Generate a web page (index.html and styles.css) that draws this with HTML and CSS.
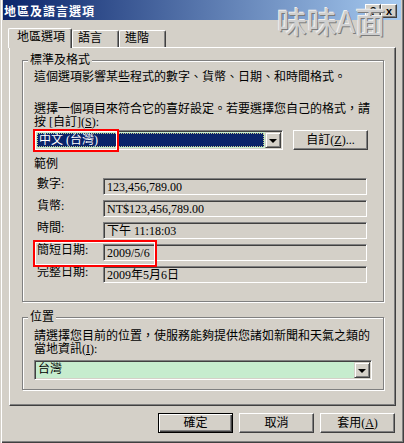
FILE: index.html
```html
<!DOCTYPE html>
<html>
    <head>
        <meta charset="utf-8">
        <title>地區及語言選項</title>
        <link rel="stylesheet" href="styles.css">
    </head>
    <body>
        <div class="window">
            <div class="titlebar">
                <span class="title">地區及語言選項</span>
                <div class="caption-buttons">
                    <span class="cap-btn">?</span>
                    <span class="cap-btn cap-close">x</span>
                </div>
            </div>
            <div class="watermark">味味A面</div>

            <div class="tabs">
                <div class="tab tab-active">地區選項</div>
                <div class="tab tab-lang">語言</div>
                <div class="tab tab-adv">進階</div>
            </div>

            <div class="pane">
                <div class="group group-format">
                    <div class="group-title">標準及格式</div>
                    <p class="line line-info">這個選項影響某些程式的數字、貨幣、日期、和時間格式。</p>
                    <p class="line line-choose">選擇一個項目來符合它的喜好設定。若要選擇您自己的格式，請<br>按 [自訂](<u>S</u>):</p>
                    <div class="select-row">
                        <div class="combo combo-locale">
                            <div class="combo-value focused">中文 (台灣)</div>
                            <div class="combo-arrow"><span class="tri"></span></div>
                        </div>
                        <button class="btn">自訂(<u>Z</u>)...</button>
                    </div>
                    <div class="samples-title">範例</div>
                    <div class="samples">
                        <div class="sample">
                            <span class="sample-label">數字:</span>
                            <span class="field">123,456,789.00</span>
                        </div>
                        <div class="sample">
                            <span class="sample-label">貨幣:</span>
                            <span class="field">NT$123,456,789.00</span>
                        </div>
                        <div class="sample">
                            <span class="sample-label">時間:</span>
                            <span class="field">下午 11:18:03</span>
                        </div>
                        <div class="sample">
                            <span class="sample-label">簡短日期:</span>
                            <span class="field">2009/5/6</span>
                        </div>
                        <div class="sample">
                            <span class="sample-label">完整日期:</span>
                            <span class="field">2009年5月6日</span>
                        </div>
                    </div>
                </div>

                <div class="group group-location">
                    <div class="group-title">位置</div>
                    <p class="line line-location">請選擇您目前的位置，使服務能夠提供您諸如新聞和天氣之類的<br>當地資訊(<u>I</u>):</p>
                    <div class="combo combo-country">
                        <div class="combo-value">台灣</div>
                        <div class="combo-arrow"><span class="tri"></span></div>
                    </div>
                </div>
            </div>

            <div class="footer">
                <button class="btn btn-default">確定</button>
                <button class="btn">取消</button>
                <button class="btn">套用(<u>A</u>)</button>
            </div>

            <div class="mark mark-locale"></div>
            <div class="mark mark-short"></div>
        </div>
    </body>
</html>
```

FILE: styles.css
```css
body {
    margin: 0;
    background: #d4d0c8;
    font-family: "Liberation Serif", "Noto Sans CJK TC", serif;
    font-size: 12px;
    line-height: 13px;
    color: #000;
}

p {
    margin: 0;
}

u {
    text-decoration: underline;
}

.window {
    position: relative;
    width: 404px;
    height: 443px;
    box-sizing: border-box;
    padding: 0 3px 3px 3px;
    background: #d4d0c8;
    box-shadow: inset 1px 0 #d4d0c8, inset 2px 0 #fff, inset -1px -1px #404040, inset -2px -2px #808080;
    overflow: hidden;
}

/* title bar */
.titlebar {
    height: 20px;
    display: flex;
    align-items: flex-start;
    justify-content: space-between;
    padding: 0 4px 0 1px;
    background: linear-gradient(to right, #0a246a, #a6caf0);
}

.title {
    margin-top: 4px;
    color: #fff;
    font-family: "Noto Sans CJK TC", sans-serif;
    font-weight: bold;
    letter-spacing: 1px;
}

.caption-buttons {
    display: flex;
    margin-top: 4px;
}

.cap-btn {
    width: 16px;
    height: 14px;
    box-sizing: border-box;
    border: 1px solid;
    border-color: #fff #404040 #404040 #fff;
    box-shadow: inset -1px -1px #808080;
    background: #d4d0c8;
    font: bold 11px/12px "Liberation Sans", sans-serif;
    text-align: center;
}

.watermark {
    position: absolute;
    left: 277px;
    top: 4px;
    font-family: "Noto Sans CJK TC", sans-serif;
    font-size: 30px;
    line-height: 32px;
    color: #cfcfcf;
    text-shadow: 1px 1px 0 #7c7c7c, -1px -1px 0 #eeeeee;
}

/* tabs */
.tabs {
    display: flex;
    align-items: flex-end;
    height: 19px;
    margin: 8px 0 0 5px;
}

.tab {
    height: 17px;
    box-sizing: border-box;
    padding: 1px 0 0 5px;
    border: 1px solid;
    border-bottom: none;
    border-color: #fff #404040 #fff #fff;
    border-radius: 2px 2px 0 0;
    box-shadow: inset -1px 0 #808080;
    background: #d4d0c8;
}

.tab-active {
    width: 64px;
    height: 20px;
    margin-bottom: -1px;
    padding: 2px 0 0 8px;
    position: relative;
    z-index: 1;
}

.tab-lang {
    width: 47px;
}

.tab-adv {
    width: 47px;
}

.pane {
    width: 387px;
    height: 359px;
    box-sizing: border-box;
    margin-left: 6px;
    padding: 12px 0 0 12px;
    border: 1px solid;
    border-color: #fff #404040 #404040 #fff;
    box-shadow: inset -1px -1px #808080;
}

/* group boxes */
.group {
    width: 362px;
    box-sizing: border-box;
    display: flex;
    flex-direction: column;
    padding: 0 11px;
    border: 1px solid #808080;
    box-shadow: inset 1px 1px #fff, 1px 1px #fff;
}

.group-format {
    height: 242px;
}

.group-location {
    height: 73px;
    margin-top: 15px;
}

.group-title {
    align-self: flex-start;
    margin: -7px 0 0 -6px;
    padding: 0 2px;
    background: #d4d0c8;
}

.line-info {
    margin-top: 4px;
}

.line-choose {
    margin-top: 19px;
}

.line-location {
    margin-top: 6px;
}

.select-row {
    display: flex;
    column-gap: 10px;
    margin-top: 1px;
}

/* combo boxes */
.combo {
    display: flex;
    height: 20px;
    box-sizing: border-box;
    padding: 1px;
    border: 1px solid;
    border-color: #808080 #fff #fff #808080;
    box-shadow: inset 1px 1px #404040, inset -1px -1px #d4d0c8;
    background: #c6ecce;
}

.combo-locale {
    width: 249px;
}

.combo-country {
    width: 338px;
    margin-top: 4px;
}

.combo-value {
    flex: 1;
    padding: 1px 0 0 2px;
    line-height: 13px;
}

.combo-value.focused {
    margin: 1px;
    padding: 0 0 0 1px;
    border: 1px dotted #c8c890;
    background: #0a246a;
    color: #fff;
}

.combo-arrow {
    width: 16px;
    height: 16px;
    box-sizing: border-box;
    display: flex;
    align-items: center;
    justify-content: center;
    border: 1px solid;
    border-color: #d4d0c8 #404040 #404040 #d4d0c8;
    box-shadow: inset 1px 1px #fff, inset -1px -1px #808080;
    background: #d4d0c8;
}

.tri {
    width: 0;
    height: 0;
    border-left: 4px solid transparent;
    border-right: 4px solid transparent;
    border-top: 4px solid #000;
    margin-top: 1px;
}

/* buttons */
.btn {
    width: 75px;
    height: 20px;
    box-sizing: border-box;
    padding: 0;
    border: 1px solid;
    border-color: #fff #404040 #404040 #fff;
    box-shadow: inset -1px -1px #808080;
    background: #d4d0c8;
    font: inherit;
    color: #000;
    text-align: center;
}

.btn-default {
    border-color: #000;
    box-shadow: inset 1px 1px #fff, inset -1px -1px #404040, inset -2px -2px #808080;
}

/* samples */
.samples-title {
    margin-top: 8px;
}

.samples {
    display: flex;
    flex-direction: column;
    row-gap: 5px;
    margin-top: 7px;
}

.sample {
    display: flex;
    padding-left: 3px;
}

.sample-label {
    width: 66px;
    line-height: 13px;
}

.field {
    width: 264px;
    height: 17px;
    box-sizing: border-box;
    display: flex;
    align-items: center;
    padding: 1px 0 0 3px;
    border: 1px solid;
    border-color: #808080 #fff #fff #808080;
    box-shadow: inset 1px 1px #404040;
}

.footer {
    display: flex;
    justify-content: flex-end;
    column-gap: 6px;
    margin-top: 7px;
    padding-right: 6px;
}

/* red highlight frames drawn over the dialog */
.mark {
    position: absolute;
    box-sizing: border-box;
    border: 2px solid #f00;
    box-shadow: inset 1px 1px #fff, inset -1px -1px #fff;
}

.mark-locale {
    left: 33px;
    top: 129px;
    width: 86px;
    height: 23px;
}

.mark-short {
    left: 33px;
    top: 240px;
    width: 124px;
    height: 27px;
}
```
